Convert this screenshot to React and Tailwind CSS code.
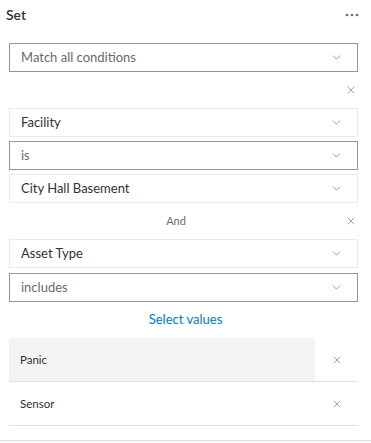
import { ChevronDown, X } from "lucide-react";

const Select = ({ label, strong, muted }) => (
  <div
    className={`h-[29px] ml-[9px] mr-[13px] flex items-center justify-between pl-[11px] pr-[14px] border ${
      strong ? "border-[#959595]" : "border-[#eaeaea]"
    }`}
  >
    <span className={`text-[13px] ${muted ? "text-[#6a6a6a]" : "text-[#323232]"}`}>{label}</span>
    <ChevronDown size={13} strokeWidth={1.25} className="text-[#6a6a6a]" />
  </div>
);

const Close = () => <X size={12} strokeWidth={1.25} className="text-[#6a6a6a]" />;

export default function App() {
  return (
    <div className="w-[371px] h-[443px] bg-white overflow-hidden font-['Lato',sans-serif] text-[#323232] flex flex-col">
      {/* header */}
      <div className="h-[28px] flex items-center justify-between pl-[6px] pr-[12px] pt-[1px]">
        <span className="text-[14px] font-semibold">Set</span>
        <svg width="14" height="4" viewBox="0 0 14 4" className="text-[#6a6a6a] fill-current">
          <circle cx="2" cy="2" r="1.3" />
          <circle cx="7" cy="2" r="1.3" />
          <circle cx="12" cy="2" r="1.3" />
        </svg>
      </div>

      <div className="mt-[15px]">
        <Select label="Match all conditions" strong muted />
      </div>

      <div className="h-[36px] flex items-center justify-end pr-[14px]">
        <Close />
      </div>

      <div className="flex flex-col gap-[4px]">
        <Select label="Facility" />
        <Select label="is" strong muted />
        <Select label="City Hall Basement" />
      </div>

      <div className="h-[36px] flex items-center">
        <span className="w-[345px] pl-[7px] text-center text-[11px] text-[#6a6a6a]">And</span>
        <Close />
      </div>

      <div className="flex flex-col gap-[5px]">
        <Select label="Asset Type" />
        <Select label="includes" strong muted />
      </div>

      <div className="h-[36px] flex items-center justify-center">
        <span className="text-[13px] text-[#007ac2]">Select values</span>
      </div>

      <div className="ml-[9px] mr-[13px] flex flex-col">
        <div className="h-[44px] flex border-b border-[#e0e0e0]">
          <div className="w-[306px] bg-[#f3f3f3] flex items-center pl-[11px] text-[11.5px]">Panic</div>
          <div className="flex-1 flex items-center justify-center">
            <Close />
          </div>
        </div>
        <div className="h-[44px] flex border-b border-[#e0e0e0]">
          <div className="w-[306px] flex items-center pl-[11px] text-[11.5px]">Sensor</div>
          <div className="flex-1 flex items-center justify-center">
            <Close />
          </div>
        </div>
      </div>

      <div className="mt-[14px] border-t border-[#e0e0e0] flex-1 bg-[#f8f8f8]" />
    </div>
  );
}
